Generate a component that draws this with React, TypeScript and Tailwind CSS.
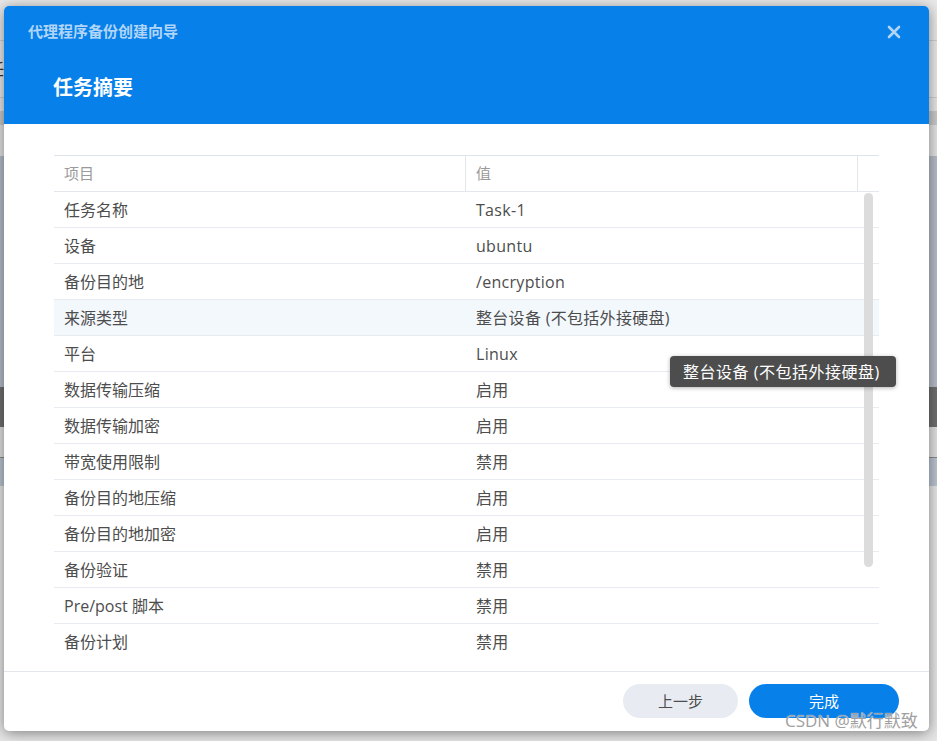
import React from "react";

const rows: [string, string][] = [
  ["任务名称", "Task-1"],
  ["设备", "ubuntu"],
  ["备份目的地", "/encryption"],
  ["来源类型", "整台设备 (不包括外接硬盘)"],
  ["平台", "Linux"],
  ["数据传输压缩", "启用"],
  ["数据传输加密", "启用"],
  ["带宽使用限制", "禁用"],
  ["备份目的地压缩", "启用"],
  ["备份目的地加密", "启用"],
  ["备份验证", "禁用"],
  ["Pre/post 脚本", "禁用"],
  ["备份计划", "禁用"],
];

export default function App() {
  return (
    <div className="relative w-[937px] h-[741px] overflow-hidden font-['Open_Sans','Noto_Sans_CJK_SC',sans-serif]">
      {/* dimmed background page */}
      <div className="flex flex-col w-full h-full">
        <div className="h-[40px] bg-[#e9e9e9]" />
        <div className="h-px bg-[#cfcfcf]" />
        <div className="h-[56px] bg-[#e9e9e9] flex items-center">
          <span className="ml-[-12px] text-[16px] text-[#333]">任务</span>
        </div>
        <div className="h-px bg-[#cfcfcf]" />
        <div className="h-[13px] bg-[#e6e6e6]" />
        <div className="h-[14px] bg-[#c9c9c9]" />
        <div className="h-[31px] bg-[#e3e3e3]" />
        <div className="h-[231px] bg-[#b5bdc8]" />
        <div className="h-[40px] bg-[#6f6f6f]" />
        <div className="h-[30px] bg-[#e0e0e0]" />
        <div className="h-px bg-[#8a8a8a]" />
        <div className="h-[28px] bg-[#bac4d0]" />
        <div className="flex-1 bg-[#e6e6e6]" />
      </div>

      {/* modal */}
      <div className="absolute left-[4px] top-[6px] w-[925px] h-[725px] bg-white rounded-[5px] shadow-[0_2px_14px_rgba(0,0,0,0.45)] flex flex-col overflow-hidden">
        {/* header */}
        <div className="h-[118px] bg-[#0780ea] shrink-0 flex flex-col relative">
          <div className="pl-[24px] pt-[15px] h-[20px] box-content text-[15px] leading-[20px] font-bold text-[#b0d5f8]">
            代理程序备份创建向导
          </div>
          <div className="pl-[49px] pt-[33px] text-[20px] leading-[28px] font-bold text-white">
            任务摘要
          </div>
          <button className="absolute right-[27px] top-[18px] w-[16px] h-[16px] flex items-center justify-center">
            <svg width="14" height="14" viewBox="0 0 14 14">
              <path d="M2 2 L12 12 M12 2 L2 12" stroke="#b0d5f8" strokeWidth="2.6" strokeLinecap="round" />
            </svg>
          </button>
        </div>

        {/* body */}
        <div className="flex-1 min-h-0 pt-[31px] pl-[50px] pr-[50px] flex flex-col">
          <div className="w-[825px] border-t border-[#dfe4ea] flex flex-col min-h-0 flex-1">
            <div className="flex h-[36px] border-b border-[#e3e7ec] shrink-0 text-[15px] text-[#9a9a9a]">
              <div className="w-[412px] border-r border-[#e3e7ec] pl-[10px] flex items-center">项目</div>
              <div className="w-[392px] border-r border-[#e3e7ec] pl-[10px] flex items-center">值</div>
              <div className="flex-1" />
            </div>
            <div className="relative flex-1 min-h-0 overflow-hidden">
              {rows.map(([k, v], i) => (
                <div
                  key={i}
                  className={
                    "flex h-[36px] border-b border-[#e8ebef] text-[16px] text-[#4d4d4d] " +
                    (i === 3 ? "bg-[#f3f8fd]" : "")
                  }
                >
                  <div className="w-[412px] pl-[10px] flex items-center whitespace-nowrap">{k}</div>
                  <div className="w-[392px] pl-[10px] flex items-center whitespace-nowrap tracking-[0.3px]">{v}</div>
                </div>
              ))}
              <div className="absolute left-[810px] top-[1px] w-[9px] h-[374px] rounded-[5px] bg-[#dcdcdc]" />
            </div>
          </div>
          <div className="h-[12px] shrink-0" />
        </div>

        {/* footer */}
        <div className="h-[60px] shrink-0 border-t border-[#e3e7ec] flex items-center justify-end pr-[30px] gap-[11px] pb-[1px]">
          <button className="w-[115px] h-[34px] rounded-full bg-[#e8ecf2] text-[15px] text-[#4d4d4d]">
            上一步
          </button>
          <button className="w-[150px] h-[34px] rounded-full bg-[#0780ea] text-[15px] text-white">
            完成
          </button>
        </div>
      </div>

      {/* tooltip */}
      <div className="absolute left-[670px] top-[356px] w-[226px] h-[31px] pl-[13px] flex items-center rounded-[4px] bg-[#4d4d4d] text-white text-[16px] tracking-[0.5px] shadow-[0_1px_4px_rgba(0,0,0,0.3)] whitespace-nowrap">
        整台设备 (不包括外接硬盘)
      </div>

      {/* watermark */}
      <div className="absolute left-[785px] top-[710px] text-[17px] leading-[22px] text-[#a0a0a0] whitespace-nowrap [text-shadow:0_0_1px_#fff]">
        CSDN @默行默致
      </div>
    </div>
  );
}
